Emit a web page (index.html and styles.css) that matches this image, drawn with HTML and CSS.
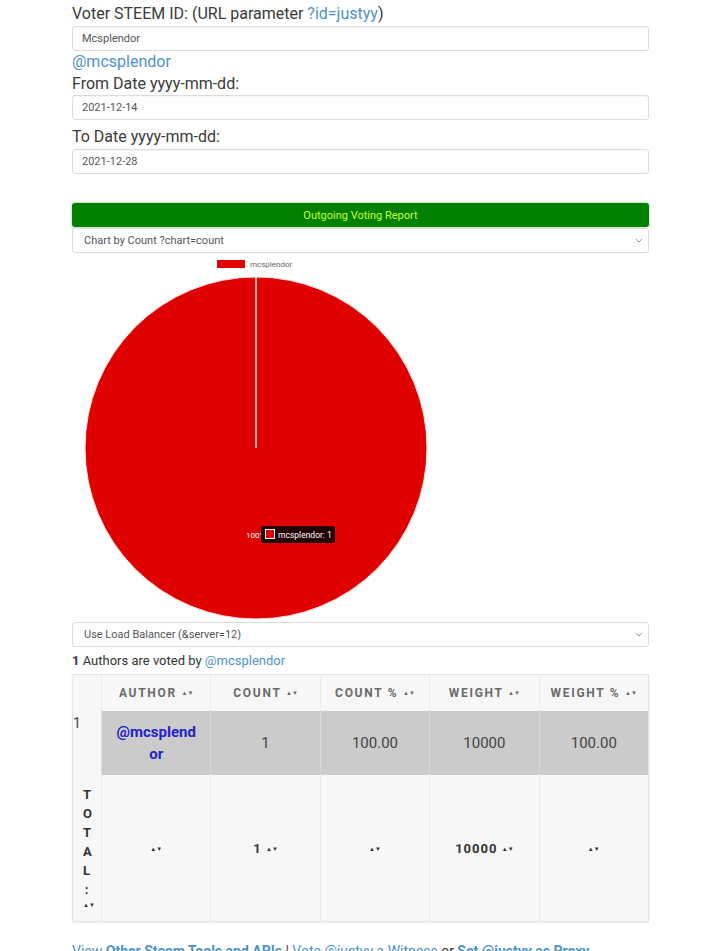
FILE: index.html
```html
<!DOCTYPE html>
<html lang="en">
<head>
    <meta charset="UTF-8">
    <meta name="viewport" content="width=device-width, initial-scale=1.0">
    <title>Steem Outgoing Voting Report</title>
    <link rel="stylesheet" href="styles.css">
</head>
<body>
    <div class="container">
        <label class="field-label first">Voter STEEM ID: (URL parameter <a href="?id=justyy">?id=justyy</a>)</label>
        <input class="text-input" type="text" value="Mcsplendor">
        <a class="profile-link" href="#">@mcsplendor</a>
        <label class="field-label from">From Date yyyy-mm-dd:</label>
        <input class="text-input" type="text" value="2021-12-14">
        <label class="field-label to">To Date yyyy-mm-dd:</label>
        <input class="text-input" type="text" value="2021-12-28">

        <button class="report-btn">Outgoing Voting Report</button>
        <div class="select-wrap">
            <select class="select">
                <option>Chart by Count ?chart=count</option>
            </select>
            <svg class="chevron" width="8" height="5" viewBox="0 0 8 5"><path d="M0.8 0.8l3.2 3.2l3.2-3.2" fill="none" stroke="#999" stroke-width="1"/></svg>
        </div>

        <div class="chart">
            <svg width="368" height="366" viewBox="0 0 368 366">
                <!-- legend -->
                <rect x="145" y="5" width="28" height="8" fill="#e20000"/>
                <text x="178" y="12" class="legend-text">mcsplendor</text>
                <!-- pie -->
                <circle cx="184" cy="193" r="171" fill="#e00000" stroke="#fbe0e0" stroke-width="1"/>
                <line x1="184" y1="22" x2="184" y2="193" stroke="#fff" stroke-width="1.4"/>
                <text x="174" y="283" class="pct-text">100%</text>
                <!-- tooltip -->
                <rect x="189" y="271" width="74" height="17" rx="3" fill="rgba(0,0,0,0.86)"/>
                <rect x="193.5" y="274.5" width="9" height="9" fill="#e00000" stroke="#fff" stroke-width="1"/>
                <text x="206" y="283" class="tip-text">mcsplendor: 1</text>
            </svg>
        </div>

        <div class="select-wrap">
            <select class="select">
                <option>Use Load Balancer (&amp;server=12)</option>
            </select>
            <svg class="chevron" width="8" height="5" viewBox="0 0 8 5"><path d="M0.8 0.8l3.2 3.2l3.2-3.2" fill="none" stroke="#999" stroke-width="1"/></svg>
        </div>

        <p class="summary"><b>1</b> Authors are voted by <a href="#">@mcsplendor</a></p>

        <table class="report">
            <colgroup>
                <col class="num-col">
                <col><col><col><col><col>
            </colgroup>
            <thead>
                <tr>
                    <th></th>
                    <th>AUTHOR <span class="sort">▲▼</span></th>
                    <th>COUNT <span class="sort">▲▼</span></th>
                    <th>COUNT % <span class="sort">▲▼</span></th>
                    <th>WEIGHT <span class="sort">▲▼</span></th>
                    <th>WEIGHT % <span class="sort">▲▼</span></th>
                </tr>
            </thead>
            <tbody>
                <tr class="data-row">
                    <td class="row-num">1</td>
                    <td class="author"><a href="#">@mcsplendor</a></td>
                    <td>1</td>
                    <td>100.00</td>
                    <td>10000</td>
                    <td>100.00</td>
                </tr>
            </tbody>
            <tfoot>
                <tr>
                    <th class="total-label">TOTAL: <span class="sort">▲▼</span></th>
                    <th><span class="sort">▲▼</span></th>
                    <th>1 <span class="sort">▲▼</span></th>
                    <th><span class="sort">▲▼</span></th>
                    <th>10000 <span class="sort">▲▼</span></th>
                    <th><span class="sort">▲▼</span></th>
                </tr>
            </tfoot>
        </table>

        <p class="footer">
            <a href="#">View <b>Other Steem Tools and APIs</b></a> | <a href="#">Vote @justyy a Witness</a> or <a href="#"><b>Set @justyy as Proxy</b></a>
        </p>
    </div>
</body>
</html>
```

FILE: styles.css
```css
body {
    margin: 0;
    padding: 0;
    font-family: Roboto, "Liberation Sans", Arial, sans-serif;
    color: #333;
    background-color: #fff;
}
a {
    color: #4d93c4;
    text-decoration: none;
}
.container {
    width: 577px;
    margin-left: 72px;
    padding-top: 4px;
}
.field-label {
    display: block;
    font-size: 16px;
    line-height: 20px;
    color: #3a3a3a;
}
.field-label.first {
    margin-bottom: 2px;
}
.field-label.from {
    margin-top: 2px;
    margin-bottom: 1px;
}
.field-label.to {
    margin-top: 7px;
    margin-bottom: 2px;
}
.text-input {
    display: block;
    width: 100%;
    box-sizing: border-box;
    height: 25px;
    padding: 0 9px;
    font-family: Roboto, "Liberation Sans", Arial, sans-serif;
    font-size: 11px;
    color: #555;
    border: 1px solid #dcdcdc;
    border-radius: 3px;
    box-shadow: inset 0 1px 1px rgba(0, 0, 0, 0.04);
    outline: none;
}
.profile-link {
    display: block;
    font-size: 16px;
    line-height: 20px;
    margin-top: 1px;
}
.report-btn {
    display: block;
    width: 100%;
    height: 24px;
    margin-top: 29px;
    border: none;
    border-radius: 3px;
    background-color: #008000;
    color: #ccff33;
    font-family: Roboto, "Liberation Sans", Arial, sans-serif;
    font-size: 11px;
    box-shadow: 0 0 3px rgba(0, 100, 0, 0.45);
}
.select-wrap {
    position: relative;
    margin-top: 1px;
}
.select {
    display: block;
    width: 100%;
    height: 25px;
    box-sizing: border-box;
    padding: 0 11px;
    appearance: none;
    -webkit-appearance: none;
    background-color: #fff;
    border: 1px solid #dcdcdc;
    border-radius: 3px;
    font-family: Roboto, "Liberation Sans", Arial, sans-serif;
    font-size: 11px;
    color: #555;
    outline: none;
}
.chevron {
    position: absolute;
    right: 6px;
    top: 10px;
}
.chart {
    height: 366px;
    margin-top: 2px;
}
.chart svg {
    display: block;
}
.legend-text {
    font-family: Roboto, "Liberation Sans", Arial, sans-serif;
    font-size: 8px;
    fill: #666;
}
.pct-text {
    font-family: Roboto, "Liberation Sans", Arial, sans-serif;
    font-size: 8px;
    fill: #fff;
}
.tip-text {
    font-family: Roboto, "Liberation Sans", Arial, sans-serif;
    font-size: 8.5px;
    fill: #fff;
}
.summary {
    margin: 4px 0 3px;
    font-size: 13px;
    line-height: 20px;
    color: #333;
}
.report {
    width: 100%;
    border-collapse: collapse;
    table-layout: fixed;
    border: 1px solid #e2e2e2;
    box-shadow: 0 1px 2px rgba(0, 0, 0, 0.08);
}
.report .num-col {
    width: 29px;
}
.report th,
.report td {
    text-align: center;
    border-left: 1px solid #ebebeb;
}
.report thead th {
    padding: 10px 0;
    line-height: 15px;
    background-color: #f7f7f7;
    font-size: 12px;
    font-weight: bold;
    color: #6a6a6a;
    letter-spacing: 1.7px;
}
.sort {
    display: inline-block;
    white-space: nowrap;
    font-size: 6px;
    letter-spacing: 0;
    vertical-align: 2px;
}
.data-row td {
    padding: 10px 12px;
    background-color: #cbcbcb;
    border-left: 1px solid #d9d9d9;
    font-size: 15px;
    line-height: 22px;
    color: #444;
}
.data-row td.row-num {
    background-color: #f7f7f7;
    text-align: left;
    vertical-align: top;
    padding: 1px 0 0 0;
    font-size: 14px;
    border-left: none;
}
.data-row .author {
    word-break: break-all;
}
.data-row .author a {
    color: #2323c8;
    font-weight: bold;
}
.report tfoot th {
    padding: 0;
    background-color: #f7f7f7;
    font-size: 13px;
    font-weight: bold;
    color: #333;
    letter-spacing: 1px;
}
.report tfoot th.total-label {
    padding: 10px 10px;
    word-break: break-all;
    line-break: anywhere;
    line-height: 19px;
    border-left: none;
}
.total-label .sort {
    display: block;
    line-height: 12px;
    vertical-align: baseline;
}
.footer {
    margin: 19px 0 0;
    font-size: 14px;
    line-height: 20px;
    color: #333;
}
.footer b {
    font-weight: bold;
}
```
